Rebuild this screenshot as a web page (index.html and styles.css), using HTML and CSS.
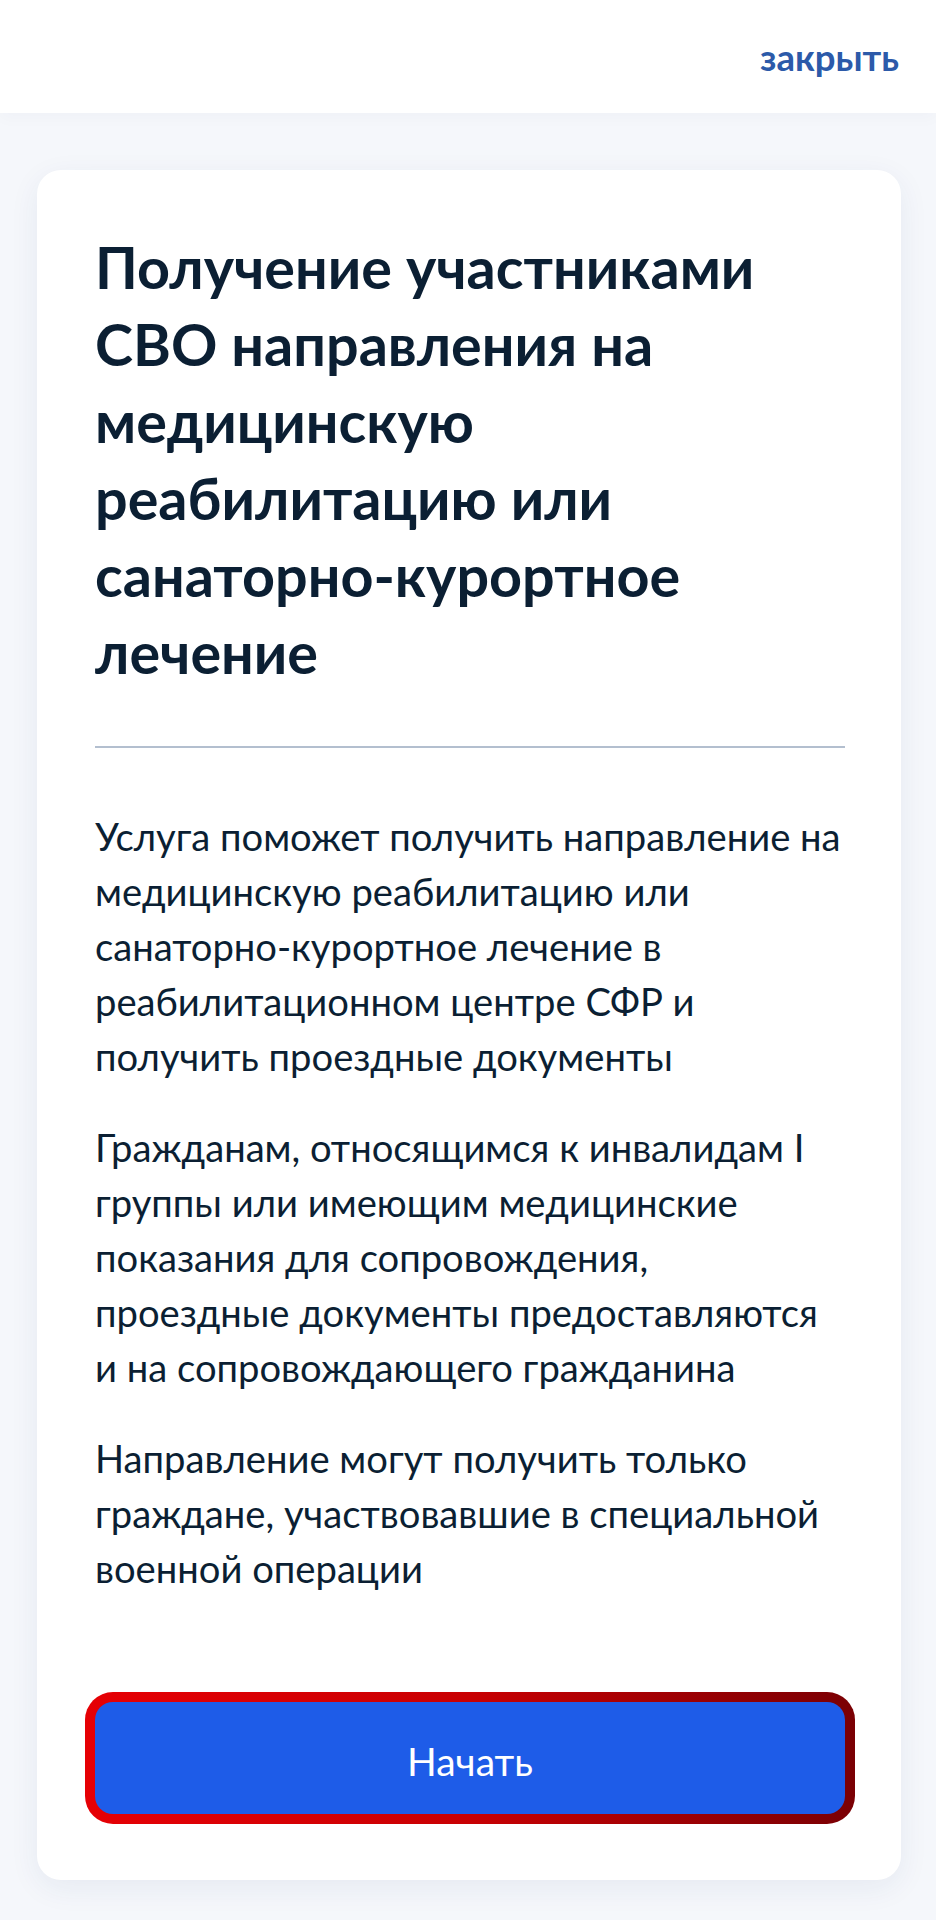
FILE: index.html
```html
<!DOCTYPE html>
<html lang="ru">
<head>
<meta charset="utf-8">
<title>Получение участниками СВО направления</title>
<link rel="stylesheet" href="styles.css">
</head>
<body>
<header class="topbar">
  <a class="close-link" href="#">закрыть</a>
</header>
<main class="page">
  <section class="card">
    <h1 class="title">Получение участниками СВО направления на медицинскую реабилитацию или санаторно-курортное лечение</h1>
    <hr class="divider">
    <div class="text">
      <p>Услуга поможет получить направление на медицинскую реабилитацию или санаторно-курортное лечение в реабилитационном центре СФР и получить проездные документы</p>
      <p>Гражданам, относящимся к инвалидам I группы или имеющим медицинские показания для сопровождения, проездные документы предоставляются и на сопровождающего гражданина</p>
      <p>Направление могут получить только граждане, участвовавшие в специальной военной операции</p>
    </div>
    <div class="btn-ring">
      <button class="btn-start" type="button">Начать</button>
    </div>
  </section>
</main>
</body>
</html>
```

FILE: styles.css
```css
* {
  box-sizing: border-box;
}

html, body {
  margin: 0;
  padding: 0;
}

body {
  background: #f5f7fb;
  font-family: Lato, "Noto Sans", sans-serif;
  color: #0b1f33;
  min-height: 1920px;
}

.topbar {
  height: 113px;
  background: #ffffff;
  display: flex;
  justify-content: flex-end;
  align-items: flex-start;
  padding: 33px 37px 0 0;
  box-shadow: 0 6px 14px rgba(20, 40, 90, 0.025);
}

.close-link {
  font-size: 36.5px;
  font-weight: 700;
  color: #2c5aa9;
  text-decoration: none;
  line-height: 48px;
}

.page {
  padding: 57px 35px 40px 37px;
}

.card {
  background: #ffffff;
  border-radius: 24px;
  box-shadow: 0 8px 30px rgba(30, 55, 110, 0.07);
  padding: 58px 56px 56px 58px;
}

.title {
  margin: 0;
  font-size: 57.5px;
  line-height: 77px;
  font-weight: 700;
  color: #0b1f33;
}

.divider {
  margin: 56px 0 0 0;
  border: 0;
  height: 2px;
  background: #b3bfcf;
}

.text {
  margin-top: 61px;
  display: flex;
  flex-direction: column;
  gap: 36px;
}

.text p {
  margin: 0;
  font-size: 38.2px;
  line-height: 55px;
  font-weight: 400;
  color: #0b1f33;
}

.btn-ring {
  margin: 96px -10px 0 -10px;
  padding: 10px;
  border-radius: 28px;
  background: linear-gradient(90deg, #e60005 0%, #c80003 50%, #7a0004 100%);
}

.btn-start {
  display: block;
  width: 100%;
  height: 112px;
  border: 0;
  border-radius: 18px;
  background: #1e5ce8;
  color: #ffffff;
  font-family: Lato, "Noto Sans", sans-serif;
  font-size: 39px;
  font-weight: 400;
  padding: 6px 0 0 0;
}
```
